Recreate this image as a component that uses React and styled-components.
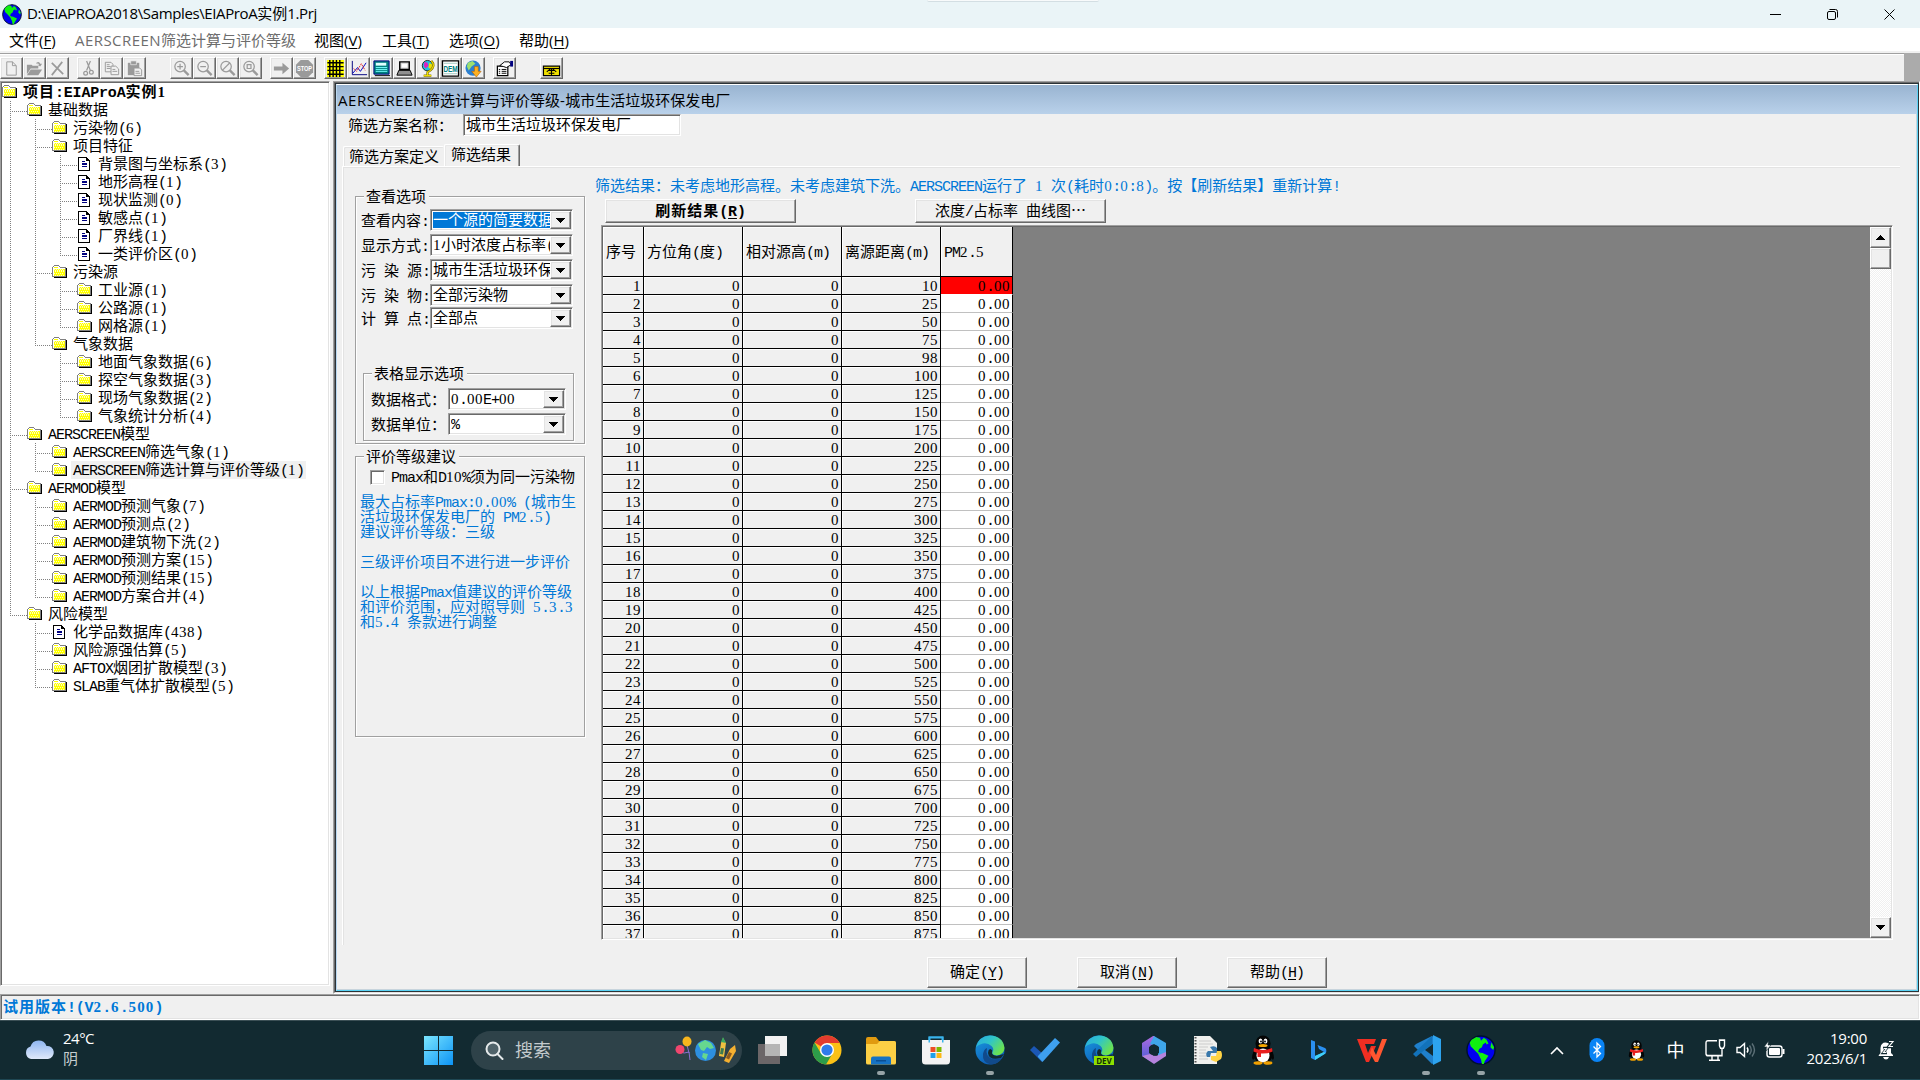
import React from "react";
import styled, { createGlobalStyle, css } from "styled-components";

const Global = createGlobalStyle`
  * { box-sizing: border-box; }
  body { margin: 0; background: #f0f0f0; overflow: hidden; color: #000; }
  svg { display: block; flex: none; }
`;

/* ---------- text ---------- */
const cjk = `"Noto Sans CJK SC", sans-serif`;
const Line = styled.span`
  display: block;
  height: 15px;
  line-height: 12px;
  white-space: pre;
  font-size: 15px;
  font-family: ${cjk};
  font-weight: ${(p) => (p.$bold ? 700 : 400)};
  letter-spacing: ${(p) => (p.$bold ? 1 : 0)}px;
  flex: none;
`;
const Ui = styled.span`
  font-family: "Open Sans", sans-serif;
  letter-spacing: ${(p) => p.$track}px;
`;
const Mono = styled.span`
  font-family: "Liberation Mono", monospace;
  letter-spacing: ${(p) => (p.$bold ? -0.2 : -1)}px;
`;
const Digits = styled.span`
  font-family: "Liberation Serif", serif;
  letter-spacing: ${(p) => (p.$bold ? 1.2 : 0.5)}px;
`;
const Key = styled.span`
  text-decoration: underline;
  text-underline-offset: 2px;
`;
function Text({ children, hot, bold, ui, track = 0 }) {
  const runs = children.split(ui ? /([\x20-\x7e]+)/ : /([0-9]+|[\x20-\x2f\x3a-\x7e]+)/).filter(Boolean);
  const Latin = ui ? Ui : Mono;
  return (
    <Line $bold={bold}>
      {runs.map((r, i) => {
        if (!ui && /^[0-9]/.test(r)) return <Digits key={i} $bold={bold}>{r}</Digits>;
        if (/^[\x20-\x7e]/.test(r)) return <Latin key={i} $bold={bold} $track={track}>{r}</Latin>;
        return <span key={i}>{r}</span>;
      })}
      {hot && (
        <Latin $bold={bold} $track={track}>
          (<Key>{hot}</Key>)
        </Latin>
      )}
    </Line>
  );
}

/* ---------- shell ---------- */
const Screen = styled.div`
  width: 1920px;
  height: 1080px;
  display: flex;
  flex-direction: column;
  background: #f0f0f0;
  overflow: hidden;
`;
const TitleBar = styled.header`
  position: relative;
  height: 28px;
  flex: none;
  display: flex;
  align-items: center;
  padding-left: 2px;
  gap: 5px;
  background: #eaf4f7;
`;
const Notch = styled.div`
  position: absolute;
  left: 927px;
  top: 0;
  width: 172px;
  height: 2px;
  background: #f8fafb;
  border-bottom: 1px solid #d3dee3;
  border-radius: 0 0 4px 4px;
`;
const WindowButtons = styled.div`
  margin-left: auto;
  display: flex;
  padding-right: 2px;
`;
const WinBtn = styled.div`
  width: 57px;
  height: 28px;
  display: flex;
  align-items: center;
  justify-content: center;
`;
const MenuBar = styled.nav`
  height: 25px;
  flex: none;
  display: flex;
  align-items: center;
  padding: 4px 0 0 9px;
  background: #fff;
  border-bottom: 2px solid #f0f0f0;
`;
const MenuItem = styled.div`
  width: ${(p) => p.$w}px;
  color: ${(p) => (p.$off ? "#6d6d6d" : "#000")};
  display: flex;
`;
const ToolRow = styled.div`
  height: 28px;
  flex: none;
  display: flex;
  background: #ababab;
`;
const Toolbar = styled.div`
  width: 1904px;
  background: #f0f0f0;
  border-top: 1px solid #a0a0a0;
  box-shadow: inset 0 1px 0 #fff;
  display: flex;
  padding-top: 3px;
`;
const ToolGroup = styled.div`
  display: flex;
  margin-left: ${(p) => p.$gap}px;
`;
const raised = css`
  background: #f0f0f0;
  border: 1px solid;
  border-color: #fff #696969 #696969 #fff;
  box-shadow: inset -1px -1px 0 #a0a0a0, inset 1px 1px 0 #e3e3e3;
`;
const sunken = css`
  border: 1px solid;
  border-color: #a0a0a0 #fff #fff #a0a0a0;
  box-shadow: inset 1px 1px 0 #696969, inset -1px -1px 0 #e3e3e3;
`;
const ToolBtn = styled.div`
  width: 23px;
  height: 22px;
  display: flex;
  align-items: center;
  justify-content: center;
  ${raised}
`;
const Main = styled.main`
  display: flex;
  gap: 3px;
  height: 913px;
  flex: none;
`;
const StatusBar = styled.footer`
  height: 26px;
  flex: none;
  ${sunken}
  display: flex;
  align-items: center;
  padding: 1px 0 0 2px;
  color: #0078d7;
`;

/* ---------- tree ---------- */
const TreePanel = styled.aside`
  width: 330px;
  height: 905px;
  flex: none;
  background: #fff;
  ${sunken}
  padding: 1px;
`;
const TreeRow = styled.div`
  display: flex;
  align-items: center;
  height: 18px;
`;
const dots = (dir) => `repeating-linear-gradient(${dir}, #808080 0 1px, transparent 1px 2px)`;
const Guide = styled.div`
  width: 25px;
  height: 18px;
  flex: none;
  display: grid;
  grid-template-columns: 8px 1px 1fr;
`;
const VLine = styled.div`
  grid-column: 2;
  height: ${(p) => p.$h}px;
  background: ${dots("to bottom")};
`;
const HLine = styled.div`
  grid-column: 3;
  height: 1px;
  margin: 10px 0 0 1px;
  background: ${dots("to right")};
`;
const TreeLabel = styled.div`
  height: 18px;
  display: flex;
  align-items: center;
  margin-left: 4px;
  padding: 0 2px;
  background: ${(p) => (p.$sel ? "#f0f0f0" : "transparent")};
`;

const TREE = [
  [0, "项目:EIAProA实例1"],
  [1, "基础数据"],
  [2, "污染物(6)"],
  [2, "项目特征"],
  [3, "背景图与坐标系(3)", "doc"],
  [3, "地形高程(1)", "doc"],
  [3, "现状监测(0)", "doc"],
  [3, "敏感点(1)", "doc"],
  [3, "厂界线(1)", "doc"],
  [3, "一类评价区(0)", "doc"],
  [2, "污染源"],
  [3, "工业源(1)"],
  [3, "公路源(1)"],
  [3, "网格源(1)"],
  [2, "气象数据"],
  [3, "地面气象数据(6)"],
  [3, "探空气象数据(3)"],
  [3, "现场气象数据(2)"],
  [3, "气象统计分析(4)"],
  [1, "AERSCREEN模型"],
  [2, "AERSCREEN筛选气象(1)"],
  [2, "AERSCREEN筛选计算与评价等级(1)"],
  [1, "AERMOD模型"],
  [2, "AERMOD预测气象(7)"],
  [2, "AERMOD预测点(2)"],
  [2, "AERMOD建筑物下洗(2)"],
  [2, "AERMOD预测方案(15)"],
  [2, "AERMOD预测结果(15)"],
  [2, "AERMOD方案合并(4)"],
  [1, "风险模型"],
  [2, "化学品数据库(438)", "doc"],
  [2, "风险源强估算(5)"],
  [2, "AFTOX烟团扩散模型(3)"],
  [2, "SLAB重气体扩散模型(5)"],
];
const continues = (row, level) => {
  for (let i = row + 1; i < TREE.length; i++) {
    if (TREE[i][0] < level) return false;
    if (TREE[i][0] === level) return true;
  }
  return false;
};

const FolderIcon = () => (
  <svg width="15" height="14" viewBox="0 0 15 14" shapeRendering="crispEdges">
    <path d="M2 13h13V3h-1v9H2z" fill="#000" />
    <path d="M0 2h1V1h1V0h5v1h1v1h6v10H0z" fill="#808080" />
    <path d="M1 2h1V1h5v1h1v1h5v8H1z" fill="#fff" />
    <path d="M2 2h4v1H2zM2 4h11v7H2z" fill="#ffff00" />
    <path d="M2 4h1v1H2zM4 4h1v1H4zM6 4h1v1H6zM8 4h1v1H8zM10 4h1v1h-1zM3 6h1v1H3zM5 6h1v1H5zM7 6h1v1H7zM9 6h1v1H9zM11 6h1v1h-1zM2 8h1v1H2zM4 8h1v1H4zM6 8h1v1H6zM8 8h1v1H8zM10 8h1v1h-1zM3 5h1v1H3zM5 5h1v1H5zM7 5h1v1H7zM9 5h1v1H9zM11 5h1v1h-1zM3 10h1v1H3zM5 10h1v1H5zM7 10h1v1H7zM9 10h1v1H9zM11 10h1v1h-1z" fill="#fff" opacity=".7" />
  </svg>
);
const DocIcon = () => (
  <svg width="15" height="14" viewBox="0 0 15 14" shapeRendering="crispEdges">
    <path d="M1 0h9v1h1v1h1v1h1v11H1z" fill="#000" />
    <path d="M2 1h7v3h3v9H2z" fill="#fff" />
    <path d="M5 4h3v1H5zM5 6h5v2H5zM5 9h5v1H5z" fill="#000080" />
  </svg>
);

function Tree() {
  return (
    <TreePanel>
      {TREE.map(([level, label, kind], row) => (
        <TreeRow key={row}>
          {Array.from({ length: level }, (_, i) => {
            const own = i === level - 1;
            const more = continues(row, i + 1);
            return (
              <Guide key={i}>
                <VLine $h={more ? 18 : own ? 11 : 0} />
                {own && <HLine />}
              </Guide>
            );
          })}
          {kind === "doc" ? <DocIcon /> : <FolderIcon />}
          <TreeLabel $sel={row === 21}>
            <Text bold={level === 0}>{label}</Text>
          </TreeLabel>
        </TreeRow>
      ))}
    </TreePanel>
  );
}

/* ---------- child window ---------- */
const Mdi = styled.section`
  width: 1587px;
  height: 913px;
  border: 1px solid;
  border-color: #a0a0a0 #fff #fff #a0a0a0;
`;
const MdiInner = styled.div`
  height: 100%;
  border: solid;
  border-width: 1px 0 1px 1px;
  border-color: #696969 #e3e3e3 #e3e3e3 #696969;
`;
const ChildFrame = styled.div`
  height: 100%;
  border: 1px solid #2b3236;
`;
const ChildWindow = styled.div`
  height: 100%;
  border: 1px solid;
  border-color: #fff #5ad2f4 #5ad2f4 #b9d7f0;
  box-shadow: inset -1px -1px 0 #c8d4dc;
  display: flex;
  flex-direction: column;
`;
const ChildTitle = styled.div`
  height: 29px;
  flex: none;
  padding: 4px 0 0 1px;
  display: flex;
  align-items: center;
  background: linear-gradient(#99b4d1, #b9d1ea);
`;
const NameRow = styled.div`
  display: flex;
  height: 23px;
  align-items: flex-start;
  padding-left: 11px;
`;
const NameLabel = styled.div`
  width: 115px;
  padding-top: 5px;
  display: flex;
`;
const NameInput = styled.div`
  width: 218px;
  height: 22px;
  background: #fff;
  ${sunken}
  padding: 3px 0 0 2px;
  display: flex;
`;
const Tabs = styled.div`
  display: flex;
  align-items: flex-end;
  height: 29px;
  padding-left: 6px;
`;
const Tab = styled.div`
  display: flex;
  justify-content: center;
  width: ${(p) => (p.$active ? 76 : 101)}px;
  height: ${(p) => (p.$active ? 23 : 20)}px;
  margin-bottom: ${(p) => (p.$active ? -1 : 0)}px;
  padding: ${(p) => (p.$active ? "3px 2px 0 0" : "3px 0 0 0")};
  background: #f0f0f0;
  border: solid;
  border-width: 1px ${(p) => (p.$active ? 1 : 0)}px 0 1px;
  border-color: #fff #696969 #fff #fff;
  border-radius: 2px 2px 0 0;
  box-shadow: ${(p) => (p.$active ? "inset -1px 0 0 #a0a0a0, inset 1px 1px 0 #e8e8e8" : "inset 1px 1px 0 #e3e3e3")};
`;
const TabPage = styled.div`
  margin-left: 5px;
  width: 1558px;
  height: 779px;
  border: solid #fff;
  border-width: 1px 0 0 1px;
  box-shadow: inset 1px 1px 0 #e3e3e3;
  display: flex;
  align-items: flex-start;
  padding-left: 12px;
`;
const SideColumn = styled.div`
  width: 230px;
  padding-top: 29px;
  display: flex;
  flex-direction: column;
  gap: 12px;
`;
const GroupBox = styled.div`
  height: ${(p) => p.$h}px;
  border: 1px solid #a0a0a0;
  box-shadow: 1px 1px 0 #fff, inset 1px 1px 0 #fff;
  display: flex;
  flex-direction: column;
  padding-left: ${(p) => p.$pad}px;
  ${(p) => p.$inner && "width: 211px; margin: 39px 0 0 2px;"}
`;
const Legend = styled.div`
  align-self: flex-start;
  margin: -8px 0 0 ${(p) => p.$x}px;
  padding: 1px 3px 0 2px;
  height: 15px;
  background: #f0f0f0;
  display: flex;
`;
const Fields = styled.div`
  display: grid;
  grid-template-columns: ${(p) => p.$label}px ${(p) => p.$field}px;
  grid-auto-rows: 25px;
  padding-top: ${(p) => p.$top}px;
`;
const FieldLabel = styled.div`
  padding-top: 5px;
  display: flex;
  ${(p) => p.$up && "margin-top: -2px;"}
`;
const Select = styled.div`
  height: 22px;
  background: #fff;
  ${sunken}
  padding: 1px;
  display: flex;
  ${(p) => p.$up && "margin-top: -2px;"}
`;
const SelectValue = styled.div`
  flex: 1;
  min-width: 0;
  overflow: hidden;
  margin: 1px 0 1px 1px;
  padding-top: 1px;
  height: 16px;
  display: flex;
  ${(p) => p.$on && "background: #0078d7; color: #fff;"}
`;
const ArrowBtn = styled.div`
  width: 21px;
  height: 18px;
  flex: none;
  display: flex;
  align-items: center;
  justify-content: center;
  ${raised}
`;
const CheckRow = styled.div`
  display: flex;
  align-items: center;
  gap: 6px;
  height: 16px;
  padding-left: 10px;
  margin-top: 5px;
`;
const CheckBox = styled.div`
  width: 15px;
  height: 15px;
  background: #fff;
  ${sunken}
`;
const Advice = styled.div`
  margin-top: 10px;
  color: #0078d7;
`;
const AdviceLine = styled.div`
  height: 15px;
  display: flex;
`;

const Down = ({ up }) => (
  <svg width="10" height="5" viewBox="0 0 10 5" shapeRendering="crispEdges">
    <path d={up ? "M0 5L4.5 0L9 5z" : "M0 0h9L4.5 5z"} fill="#000" />
  </svg>
);
function Field({ label, value, on, up }) {
  return (
    <>
      <FieldLabel $up={up}><Text>{label}</Text></FieldLabel>
      <Select $up={up}>
        <SelectValue $on={on}><Text>{value}</Text></SelectValue>
        <ArrowBtn><Down /></ArrowBtn>
      </Select>
    </>
  );
}

const ResultColumn = styled.div`
  margin-left: 16px;
  width: 1292px;
  display: flex;
  flex-direction: column;
`;
const Notice = styled.div`
  padding-top: 12px;
  margin-left: -6px;
  height: 32px;
  color: #0078d7;
  display: flex;
`;
const ButtonRow = styled.div`
  display: flex;
  gap: ${(p) => p.$gap}px;
  padding-left: ${(p) => p.$x}px;
`;
const Button = styled.div`
  width: ${(p) => p.$w}px;
  height: ${(p) => p.$h}px;
  display: flex;
  align-items: center;
  justify-content: center;
  ${raised}
`;
const GridFrame = styled.div`
  margin-top: 2px;
  height: 715px;
  ${sunken}
  padding: 1px;
  background: #808080;
  display: flex;
  justify-content: space-between;
`;
const Table = styled.div`
  height: 711px;
  overflow: hidden;
  display: grid;
  grid-template-columns: 41px 99px 99px 99px 72px;
  grid-template-rows: 50px;
  grid-auto-rows: 18px;
`;
const Cell = styled.div`
  display: flex;
  align-items: center;
  justify-content: ${(p) => (p.$head ? "flex-start" : "flex-end")};
  padding: ${(p) => (p.$head ? 2 : 1)}px 2px 0 3px;
  border: solid #000;
  border-width: 0 1px 1px 0;
  background: #f0f0f0;
  box-shadow: inset 1px 1px 0 #fff;
  ${(p) => p.$data && "background: #fff; border-bottom-color: #c0c0c0; box-shadow: none;"}
  ${(p) => p.$hot && "background: #f00; border-bottom-color: #fff;"}
`;
const ScrollBar = styled.div`
  width: 21px;
  display: flex;
  flex-direction: column;
  background: repeating-conic-gradient(#fff 0 25%, #f0f0f0 0 50%) 0 0 / 2px 2px;
`;
const ScrollBtn = styled.div`
  height: 21px;
  display: flex;
  align-items: center;
  justify-content: center;
  ${raised}
  ${(p) => p.$last && "margin-top: auto;"}
`;
const DialogButtons = styled.div`
  display: flex;
  gap: 50px;
  padding: 12px 0 0 590px;
`;

const DIST = [10, 25, 50, 75, 98, ...Array.from({ length: 32 }, (_, i) => 100 + i * 25)];
const HEADS = ["序号", "方位角(度)", "相对源高(m)", "离源距离(m)", "PM2.5"];
const ADVICE = [
  "最大占标率Pmax:0.00% (城市生",
  "活垃圾环保发电厂的 PM2.5)",
  "建议评价等级：三级",
  "",
  "三级评价项目不进行进一步评价",
  "",
  "以上根据Pmax值建议的评价等级",
  "和评价范围，应对照导则 5.3.3",
  "和5.4 条款进行调整",
];

function ResultWindow() {
  return (
    <Mdi><MdiInner><ChildFrame><ChildWindow>
      <ChildTitle><Text ui track={0.55}>AERSCREEN筛选计算与评价等级-城市生活垃圾环保发电厂</Text></ChildTitle>
      <NameRow>
        <NameLabel><Text>筛选方案名称：</Text></NameLabel>
        <NameInput><Text>城市生活垃圾环保发电厂</Text></NameInput>
      </NameRow>
      <Tabs>
        <Tab><Text>筛选方案定义</Text></Tab>
        <Tab $active><Text>筛选结果</Text></Tab>
      </Tabs>
      <TabPage>
        <SideColumn>
          <GroupBox $h={248} $pad={5}>
            <Legend $x={3}><Text>查看选项</Text></Legend>
            <Fields $label={69} $field={143} $top={5}>
              <Field label="查看内容:" value="一个源的简要数据" on />
              <Field label="显示方式:" value="1小时浓度占标率(%)" />
              <Field label="污 染 源:" value="城市生活垃圾环保发电厂" />
              <Field label="污 染 物:" value="全部污染物" />
              <Field label="计 算 点:" value="全部点" up />
            </Fields>
            <GroupBox $h={68} $pad={7} $inner>
              <Legend $x={1}><Text>表格显示选项</Text></Legend>
              <Fields $label={77} $field={118} $top={7}>
                <Field label="数据格式：" value="0.00E+00" />
                <Field label="数据单位：" value="%" />
              </Fields>
            </GroupBox>
          </GroupBox>
          <GroupBox $h={281} $pad={4}>
            <Legend $x={4}><Text>评价等级建议</Text></Legend>
            <CheckRow><CheckBox /><Text>Pmax和D10%须为同一污染物</Text></CheckRow>
            <Advice>
              {ADVICE.map((t, i) => <AdviceLine key={i}><Text>{t}</Text></AdviceLine>)}
            </Advice>
          </GroupBox>
        </SideColumn>
        <ResultColumn>
          <Notice><Text>筛选结果：未考虑地形高程。未考虑建筑下洗。AERSCREEN运行了 1 次(耗时0:0:8)。按【刷新结果】重新计算!</Text></Notice>
          <ButtonRow $gap={119} $x={4}>
            <Button $w={191} $h={24}><Text bold hot="R">刷新结果</Text></Button>
            <Button $w={191} $h={24}><Text>浓度/占标率 曲线图…</Text></Button>
          </ButtonRow>
          <GridFrame>
            <Table>
              {HEADS.map((h) => <Cell key={h} $head><Text>{h}</Text></Cell>)}
              {DIST.map((d, i) => (
                <React.Fragment key={d}>
                  <Cell><Text>{String(i + 1)}</Text></Cell>
                  <Cell><Text>0</Text></Cell>
                  <Cell><Text>0</Text></Cell>
                  <Cell><Text>{String(d)}</Text></Cell>
                  <Cell $data $hot={i === 0}><Text>0.00</Text></Cell>
                </React.Fragment>
              ))}
            </Table>
            <ScrollBar>
              <ScrollBtn><Down up /></ScrollBtn>
              <ScrollBtn />
              <ScrollBtn $last><Down /></ScrollBtn>
            </ScrollBar>
          </GridFrame>
        </ResultColumn>
      </TabPage>
      <DialogButtons>
        <Button $w={100} $h={31}><Text hot="Y">确定</Text></Button>
        <Button $w={100} $h={31}><Text hot="N">取消</Text></Button>
        <Button $w={100} $h={31}><Text hot="H">帮助</Text></Button>
      </DialogButtons>
    </ChildWindow></ChildFrame></MdiInner></Mdi>
  );
}

/* ---------- icons ---------- */
const Globe = ({ w = 20, h = 20 }) => (
  <svg width={w} height={h} viewBox="0 0 32 32" preserveAspectRatio="none">
    <circle cx="16" cy="16" r="15" fill="#0000f0" stroke="#001030" strokeWidth="1.5" />
    <path d="M6 5l5-3 4 1 1 3 3-3 3 2 2 4-2 1-1-2-3 2-1 3-3 2-1 3 3 1-3 1-4-4-4-4-1-4zM13 20l4-1 7 3-2 3-2 3-1 3h-2l-1-5zM27 8l3 5-1 3-3-3z" fill="#10f010" />
  </svg>
);
const G = "#9a9a9a";
const ico = {
  new: <path d="M5 3h6l4 4v10H5zM11 3v4h4" fill="none" stroke={G} />,
  open: <g fill={G}><path d="M2 6h5l1 1h6v3H6l-4 6z" /><path d="M6 11h12l-4 6H2z" /><path d="M12 4q3-2 4 1h2l-2 3-3-2h2q-1-2-3-1z" /></g>,
  del: <path d="M4 4l12 12M15 3L4 17" stroke={G} strokeWidth="1.8" />,
  cut: <g fill="none" stroke={G} strokeWidth="1.3"><path d="M8 2l4 10M12 2L8 12" /><circle cx="7" cy="15" r="2" /><circle cx="13" cy="14" r="2" /></g>,
  copy: <g fill="#f0f0f0" stroke={G}><path d="M3.500 3.500h6l2 2v8h-8zM5 6h3M5 8h4M5 10h4" /><path d="M9.500 7.500h5l3 3v6h-8zM11 11h3M11 13h5" /></g>,
  paste: <g><path d="M3 4h12v13H3z" fill={G} /><path d="M6 2h6v4H6z" fill={G} stroke="#f0f0f0" strokeWidth=".7" /><path d="M9.500 9.500h6l2 2v6h-8zM11 13h4M11 15h5" fill="#f0f0f0" stroke={G} /></g>,
  stop: <g><path d="M6 1h8l5 5v8l-5 5H6l-5-5V6z" fill={G} /><text x="10" y="13" fontSize="8" fontWeight="700" fill="#fff" textAnchor="middle" fontFamily="Liberation Sans, sans-serif" textLength="16" lengthAdjust="spacingAndGlyphs">STOP</text></g>,
  go: <path d="M2 8h9V4l7 6-7 6v-4H2z" fill={G} />,
  grid: <g><path d="M1 1h18v18H1z" fill="#ff0" /><path d="M1.500 4h17M1.500 8h17M1.500 12h17M1.500 16h17M4 1v18M7.500 1v18M11 1v18M14.500 1v18" stroke="#000" strokeWidth="1.5" /></g>,
  chart: <g fill="none"><path d="M3.500 2v14.500H19" stroke="#000080" /><path d="M4 15l5-6 3 4 6-9" stroke="#0000c0" /><path d="M5 10l3 3 5-8 4 7" stroke="#e02020" strokeDasharray="2 1" /></g>,
  calc: <g><path d="M2 2h16v14H2z" fill="#008080" stroke="#000080" /><path d="M4 4h11v3H4z" fill="#dff" /><path d="M4 9h12M4 11h12M4 13h12" stroke="#7ff" /><path d="M3 17.500h16" stroke="#000" /></g>,
  pc: <g><path d="M5 3h10v8H5z" fill="#d0d0d0" stroke="#000" strokeWidth="1.500" /><path d="M7 5h6v4H7z" fill="#fff" /><path d="M4 12h12l2 5H2z" fill="#909090" stroke="#000" /></g>,
  globe: <g><circle cx="10" cy="7" r="5.500" fill="#20c0e0" stroke="#000" strokeWidth=".8" /><path d="M7 3l3 1 1 3-3 3-2-3z" fill="#e020c0" /><path d="M12 4l3 2-1 5-3-2z" fill="#f0e000" /><path d="M14 2q5 5-1 10l-3 2v3M6 17.500h8" fill="none" stroke="#807000" strokeWidth="2.400" /><path d="M14 2q5 5-1 10l-3 2v3M6 17.500h8" fill="none" stroke="#f0e000" strokeWidth="1.200" /></g>,
  dem: <g><path d="M1.500 2h17v16h-17z" fill="#fff" stroke="#000" strokeWidth="1.500" /><path d="M3 4.500h14M3 15.500h14" stroke="#a0c8c0" /><text x="10" y="13.500" fontSize="9.500" fontWeight="700" fill="#008080" textAnchor="middle" fontFamily="Liberation Sans, sans-serif" textLength="15" lengthAdjust="spacingAndGlyphs">DEM</text></g>,
  ie: <g><circle cx="9.500" cy="9.500" r="8" fill="#2c7fd0" /><path d="M4 4l5-2 3 3-4 3-3 4-2-4z" fill="#9be070" /><path d="M11 8h4v5h3l-5 6-5-6h3z" fill="#ffb020" stroke="#b06000" strokeWidth=".6" /></g>,
  props: <g><path d="M2.500 7.500h11v10h-11z" fill="#fff" stroke="#000" strokeWidth="1.300" /><path d="M4 11h1.500M7 11h5M4 13h1.500M7 13h5M4 15h1.500M7 15h5" stroke="#000" /><path d="M5 7l5-4h5l2 3-5 3-3-1z" fill="#fff" stroke="#000" /><path d="M16 2h3v6h-3z" fill="#000080" /></g>,
  box: <g><path d="M1.500 7.500h17v10h-17z" fill="#f0e000" stroke="#000" strokeWidth="1.300" /><path d="M2 10h16" stroke="#000" strokeWidth="1.200" /><path d="M10 10v7M5 13.500l3-2.500 2 2 2-2 3 2.500M7 15h6" fill="none" stroke="#000" strokeWidth="1.100" /></g>,
};
const zoomIcon = (inner) => (
  <g fill="none" stroke={G} strokeWidth="1.300"><circle cx="8.500" cy="8" r="5.500" /><path d="M12.500 12l5 5" strokeWidth="2.500" />{inner}</g>
);
ico.zin = zoomIcon(<path d="M5.500 8h6M8.500 5v6" />);
ico.zout = zoomIcon(<path d="M5.500 8h6" />);
ico.zno = zoomIcon(<path d="M4.500 12l8-8" />);
ico.zfit = zoomIcon(<path d="M6.500 6h4v4h-4z" />);

const TOOLS = [
  [0, ["new", "open", "del"]],
  [8, ["cut", "copy", "paste"]],
  [24, ["zin", "zout", "zno", "zfit"]],
  [8, ["go", "stop"]],
  [8, ["grid", "chart", "calc", "pc", "globe", "dem", "ie"]],
  [8, ["props"]],
  [24, ["box"]],
];

/* ---------- taskbar ---------- */
const Taskbar = styled.footer`
  height: 60px;
  flex: none;
  display: flex;
  align-items: center;
  background: #122a31;
  border-top: 1px solid #3b4f55;
  border-bottom: 1px solid #1f4753;
  padding-left: 23px;
  color: #fff;
  font-family: "Open Sans", "Noto Sans CJK SC", sans-serif;
`;
const Weather = styled.div`
  width: 401px;
  display: flex;
  align-items: center;
  gap: 8px;
  font-size: 15px;
  line-height: 20px;
`;
const WeatherText = styled.div`
  padding-bottom: 4px;
  letter-spacing: -0.5px;
`;
const Dim = styled.div`
  color: #c6cdcf;
`;
const Search = styled.div`
  width: 271px;
  height: 39px;
  margin-left: 18px;
  border-radius: 20px;
  background: #2e4249;
  display: flex;
  align-items: center;
  padding: 0 4px 0 14px;
  gap: 11px;
  color: #c3cacd;
  font-size: 18px;
  line-height: 24px;
`;
const SearchLabel = styled.span`
  padding-bottom: 1px;
`;
const SearchArt = styled.div`
  margin-left: auto;
`;
const Apps = styled.div`
  display: flex;
  margin-left: 3px;
`;
const App1 = styled.div`
  width: 54.5px;
  height: 58px;
  display: flex;
  flex-direction: column;
  align-items: center;
  padding-top: 14px;
  gap: 6px;
`;
const Pip = styled.div`
  width: 8px;
  height: 4px;
  border-radius: 2px;
  background: #97a3a7;
`;
const Tray = styled.div`
  display: flex;
  align-items: center;
  margin-left: 29px;
`;
const TrayCell = styled.div`
  width: ${(p) => p.$w}px;
  display: flex;
  justify-content: center;
  font-size: 18px;
  line-height: 24px;
`;
const Clock = styled.div`
  width: 75px;
  padding-bottom: 4px;
  text-align: right;
  font-size: 15px;
  line-height: 20px;
  letter-spacing: -0.25px;
  white-space: nowrap;
`;

const Svg = ({ children, w = 30, h = 30 }) => (
  <svg width={w} height={h} viewBox="0 0 30 30">{children}</svg>
);
const Edge = ({ id, dev }) => (
  <Svg>
    <defs>
      <linearGradient id={id + "a"} x1="0" y1="0" x2="1" y2=".6"><stop offset="0" stopColor="#2aa8e0" /><stop offset=".5" stopColor="#30c5c8" /><stop offset="1" stopColor="#6de34c" /></linearGradient>
      <linearGradient id={id + "b"} x1="0" y1="0" x2=".6" y2="1"><stop offset="0" stopColor="#1b9de2" /><stop offset="1" stopColor="#0c59b4" /></linearGradient>
    </defs>
    <circle cx="15" cy="15" r="14.500" fill={`url(#${id}b)`} />
    <path d="M1 12Q4 1 15 .5 28 1 29.500 13q-.5 7-8 7.500-5-.5-4-3.500 2-3-1-6Q10 5 1 12z" fill={`url(#${id}a)`} />
    <path d="M12 13q-2 8 5 11 6 1 10-1-4 6.500-11 6.500Q7 28 8 19q1-5 4-6z" fill="#114a8b" />
    <path d="M17 17q-1 3 5 4l7-2-3 4q-12 3-13-5 0-3 2-4 3 1 2 3z" fill="#122a31" />
    {dev && <g><path d="M10 21h20v9H10z" fill="#8ee000" /><text x="20" y="28.500" fontSize="8" fontWeight="700" textAnchor="middle" fill="#14300a" fontFamily="Open Sans, sans-serif">DEV</text></g>}
  </Svg>
);
const QQ = ({ s = 30 }) => (
  <Svg w={s} h={s}>
    <ellipse cx="15" cy="19" rx="10" ry="9" fill="#050505" />
    <path d="M4 23q0-6 4-8l2 5-5 5z M26 23q0-6-4-8l-2 5 5 5z" fill="#050505" />
    <ellipse cx="15" cy="8.500" rx="7.500" ry="8" fill="#050505" />
    <ellipse cx="15" cy="20.500" rx="6.500" ry="7" fill="#fff" />
    <ellipse cx="12.500" cy="6" rx="1.900" ry="2.600" fill="#fff" /><ellipse cx="17.500" cy="6" rx="1.900" ry="2.600" fill="#fff" />
    <circle cx="13" cy="6.500" r=".9" /><circle cx="17" cy="6.500" r=".9" />
    <ellipse cx="15" cy="10.500" rx="4.500" ry="1.600" fill="#f7a800" />
    <path d="M6 13q9 4 18 0l.5 3.500Q19 19 13 18.500V22H9.500v-4L5.500 16.500z" fill="#e81f1f" />
    <ellipse cx="10" cy="28" rx="4.500" ry="1.800" fill="#f0a000" /><ellipse cx="20" cy="28" rx="4.500" ry="1.800" fill="#f0a000" />
  </Svg>
);
const APPS = [
  [<Svg><path d="M1 9h22v20H1z" fill="#6b6668" /><path d="M8 1h22v20H8z" fill="#f2f2f2" /><path d="M8 9h15v12H8z" fill="#b5b5b5" /></Svg>],
  [<Svg>
    <circle cx="15" cy="15" r="14.500" fill="#fbc116" />
    <path d="M15 15L2.500 7.500A14.500 14.500 0 0 1 27.600 8H15z" fill="#e33b2e" />
    <path d="M2.500 7.500A14.500 14.500 0 0 0 14 29.500l6.500-11L15 15 9 18.500z" fill="#2d9c4a" />
    <circle cx="15" cy="15" r="7" fill="#fff" /><circle cx="15" cy="15" r="5.600" fill="#2f7bea" />
  </Svg>],
  [<Svg><path d="M0 4q0-2 2-2h8l3 4h15q2 0 2 2v6H0z" fill="#e09a10" /><path d="M0 9h11l3-3h14q2 0 2 2v20q0 1.500-2 1.500H2q-2 0-2-1.500z" fill="#fccf45" /><path d="M5 29.500v-6q0-2 2-2h16q2 0 2 2v6z" fill="#1673c4" /><path d="M10 25h10v1.500H10z" fill="#0b4f93" /></Svg>, true],
  [<Svg><path d="M8.500 8V2.500h13V8" fill="none" stroke="#38b3ec" strokeWidth="2" /><path d="M1 5h28v21q0 3.500-3.500 3.500h-21Q1 29.500 1 26z" fill="#f3f3f3" /><path d="M7.500 1.500h15v6H21V3H9v4.500H7.500z" fill="#38b3ec" /><path d="M9.500 12h5v5h-5z" fill="#ee4e25" /><path d="M15.500 12h5v5h-5z" fill="#7db900" /><path d="M9.500 18h5v5h-5z" fill="#1ea0e8" /><path d="M15.500 18h5v5h-5z" fill="#fdb813" /></Svg>],
  [<Edge id="e" />, true],
  [<Svg><path d="M0 15l4-4 9 8-1 8z" fill="#1b57b5" /><path d="M8 21L25 3l5 4.500L12.500 27 8 22z" fill="#3ea0ef" /></Svg>],
  [<Edge id="d" dev />],
  [<Svg><defs><linearGradient id="m" x1="0" y1="0" x2="0" y2="1"><stop offset="0" stopColor="#b06be0" /><stop offset="1" stopColor="#4a5ed8" /></linearGradient></defs>
    <path d="M14 1L3 8v13l8 5V11l8-5-4-5z" fill="url(#m)" /><path d="M15 1l12 7v13l-8 2V11l-8-2z" fill="#3fa6ea" /><path d="M3 21l8-2 6 2 10-4v4L15 29z" fill="#b583dd" /><path d="M15 9l5 3v6l-5 3-5-3v-6z" fill="#122a31" /></Svg>],
  [<Svg><path d="M1 1h16l7 7v21H1z" fill="#f0f0ee" /><path d="M2.500 2v26" stroke="#555" strokeWidth="2" strokeDasharray="1.500 1.500" /><path d="M6 6h12M6 9h14M6 12h9M6 15h7M6 18h7M6 21h9M6 24h9" stroke="#ccc" /><path d="M17 12q5-2 7 1v5h-6l-1 4h-3q-2-4 1-6h5z" fill="#3a78ab" /><path d="M24 16h4q2 4 0 8l-5 3-5-2v-4h5z" fill="#ffd345" /></Svg>],
  [<QQ />],
  [<Svg><path d="M9 5l4 1.500V21l9-4-5-3-1.500-4L23 13q2 1 1 5L13 25l-4-2z" fill="#2a8ff0" /><path d="M13 21l9-4 1.500 1.500L13 25z" fill="#3fd0f8" /></Svg>],
  [<Svg><path d="M0 4h19l-2 5H8l3 9 3-7h5l-7 16H9z" fill="#f02e22" /><path d="M15 12l4 8 6-16h5L21 27h-3l-5-9z" fill="#ff5630" /></Svg>],
  [<Svg><path d="M21 1l8 4v20l-8 4L3 11l2-2z" fill="#1f80cc" /><path d="M21 1L2 19l3 3 16-13z" fill="#1272ba" /><path d="M22 0l8 4v22l-8 4z" fill="#2da3ef" /><path d="M22 9v12l-8-6z" fill="#122a31" /></Svg>, true],
  [<Globe w={30} h={30} />, true],
];

export default function App() {
  return (
    <Screen lang="zh-CN">
      <Global />
      <TitleBar>
        <Notch />
        <Globe w={20} h={21} />
        <Text ui track={-0.38}>D:\EIAPROA2018\Samples\EIAProA实例1.Prj</Text>
        <WindowButtons>
          <WinBtn><svg width="11" height="11"><path d="M0 5.500h11" stroke="#000" /></svg></WinBtn>
          <WinBtn><svg width="11" height="11" fill="none" stroke="#000"><rect x=".5" y="2.500" width="8" height="8" rx="1.500" /><path d="M2.500.5h6q2 0 2 2v6" /></svg></WinBtn>
          <WinBtn><svg width="11" height="11"><path d="M.5.5l10 10M10.500.5l-10 10" stroke="#000" /></svg></WinBtn>
        </WindowButtons>
      </TitleBar>
      <MenuBar>
        <MenuItem $w={66}><Text ui hot="F">文件</Text></MenuItem>
        <MenuItem $w={239} $off><Text ui track={0.45}>AERSCREEN筛选计算与评价等级</Text></MenuItem>
        <MenuItem $w={68}><Text ui hot="V">视图</Text></MenuItem>
        <MenuItem $w={67}><Text ui hot="T">工具</Text></MenuItem>
        <MenuItem $w={70}><Text ui hot="O">选项</Text></MenuItem>
        <MenuItem $w={70}><Text ui hot="H">帮助</Text></MenuItem>
      </MenuBar>
      <ToolRow>
        <Toolbar>
          {TOOLS.map(([gap, items]) => (
            <ToolGroup key={items[0]} $gap={gap}>
              {items.map((n) => (
                <ToolBtn key={n}><svg width="19" height="19" viewBox="0 0 20 20">{ico[n]}</svg></ToolBtn>
              ))}
            </ToolGroup>
          ))}
        </Toolbar>
      </ToolRow>
      <Main>
        <Tree />
        <ResultWindow />
      </Main>
      <StatusBar><Text bold>试用版本!(V2.6.500)</Text></StatusBar>
      <Taskbar>
        <Weather>
          <svg width="32" height="22" viewBox="0 0 32 22">
            <defs><linearGradient id="cl" x1="0" y1="0" x2="0" y2="1"><stop offset="0" stopColor="#8fb6f0" /><stop offset="1" stopColor="#dfe9fa" /></linearGradient></defs>
            <path d="M8 20a6.500 6.500 0 0 1-.5-12.500A8.500 8.500 0 0 1 23.500 7 6.500 6.500 0 0 1 25 20z" fill="url(#cl)" />
          </svg>
          <WeatherText><div>24°C</div><Dim>阴</Dim></WeatherText>
        </Weather>
        <svg width="29" height="29" viewBox="0 0 29 29">
          <defs><linearGradient id="wn" x1="0" y1="0" x2="1" y2="1"><stop offset="0" stopColor="#7be6ff" /><stop offset="1" stopColor="#0c93f5" /></linearGradient></defs>
          <path d="M0 0h14v14H0zM15 0h14v14H15zM0 15h14v14H0zM15 15h14v14H15z" fill="url(#wn)" />
        </svg>
        <Search>
          <svg width="19" height="19" fill="#50636a" stroke="#e6eaeb" strokeWidth="2"><circle cx="8" cy="8" r="6.500" /><path d="M12.500 13l5 5" strokeLinecap="round" /></svg>
          <SearchLabel>搜索</SearchLabel>
          <SearchArt>
            <svg width="63" height="28" viewBox="0 0 63 28">
              <path d="M12 9l2 8M5 16q4 2 9 0l1 8" stroke="#8a6fd0" fill="none" />
              <ellipse cx="12" cy="5.500" rx="4.500" ry="5" fill="#f7b51d" /><ellipse cx="5" cy="13.500" rx="4.500" ry="4.500" fill="#f0466e" />
              <circle cx="30.500" cy="14.500" r="10.500" fill="#2d8fe0" /><path d="M23 8l7-4 6 3 3 5-4 1-3-2-3 4-3-1zM28 17l5 1-2 6-4-3z" fill="#66d88f" />
              <path d="M44 20l2-13 2-5 3 5-2 14z" fill="#f0c040" /><path d="M46 6l2-5 3 6z" fill="#3aa860" /><path d="M46 12l3 .5-1 6-3-.5z" fill="#3a7a50" />
              <path d="M49 25l6-12 5-4 1 6-7 12z" fill="#f5b030" /><path d="M54 16l3 1.500-3 6-3-1.500z" fill="#8a5a20" />
            </svg>
          </SearchArt>
        </Search>
        <Apps>
          {APPS.map(([icon, open], i) => (
            <App1 key={i}>{icon}{open && <Pip />}</App1>
          ))}
        </Apps>
        <Tray>
          <TrayCell $w={40}><svg width="14" height="9"><path d="M1 8l6-6 6 6" fill="none" stroke="#fff" strokeWidth="1.600" /></svg></TrayCell>
          <TrayCell $w={39}><svg width="16" height="24" viewBox="0 0 16 24"><rect x=".5" width="15" height="24" rx="7.500" fill="#0a84f5" /><path d="M4.500 8.500l7 7-3.500 3.500V5l3.500 3.500-7 7" fill="none" stroke="#fff" strokeWidth="1.300" /></svg></TrayCell>
          <TrayCell $w={40}><QQ s={21} /></TrayCell>
          <TrayCell $w={39}>中</TrayCell>
          <TrayCell $w={40}>
            <svg width="21" height="23" viewBox="0 0 21 20" preserveAspectRatio="none" fill="none" stroke="#fff" strokeWidth="1.400"><path d="M12 1.500H3q-2 0-2 2v9q0 2 2 2h14V9M7 15v3.500M4 18.500h11M13 15v3.500M14.500 1h5v5l-1 2h-3l-1-2zM17 8v6" /></svg>
          </TrayCell>
          <TrayCell $w={21}>
            <svg width="20" height="16" fill="none" stroke="#fff" strokeWidth="1.400"><path d="M1 5.500h3L8.500 1.500v13L4 10.500H1z" /><path d="M11 5.500q2 2.500 0 5" /><path d="M13.500 3.500q3.500 4.500 0 9M16 1.500q5 6.500 0 13" stroke="#5d7077" /></svg>
          </TrayCell>
          <TrayCell $w={36}>
            <svg width="21" height="18"><rect x="3" y="5" width="15" height="11" rx="2.500" fill="none" stroke="#fff" strokeWidth="1.400" /><rect x="5" y="7" width="11" height="7" rx="1" fill="#fff" /><path d="M18.500 8h2v5h-2z" fill="#fff" /><path d="M4.500 0L0 6h3l-1 4 5-6H4z" fill="#fff" stroke="#122a31" strokeWidth=".6" /></svg>
          </TrayCell>
          <Clock><div>19:00</div><div>2023/6/1</div></Clock>
          <TrayCell $w={38}>
            <svg width="18" height="20"><path d="M2 15l1.500-2V8Q4 2.500 8.500 2.500 14 3 14 8v5l2 2v1H1.500zM6 17h6q-1 2.500-3 2.500T6 17z" fill="#fff" /><path d="M11 1h5l-5 6h5M6 8h4l-4 5h4" fill="none" stroke="#122a31" strokeWidth="2.500" /><path d="M12 1.500h4l-4 5h4M6.500 8.500h3l-3 4h3" fill="none" stroke="#fff" strokeWidth="1.200" /></svg>
          </TrayCell>
        </Tray>
      </Taskbar>
    </Screen>
  );
}
